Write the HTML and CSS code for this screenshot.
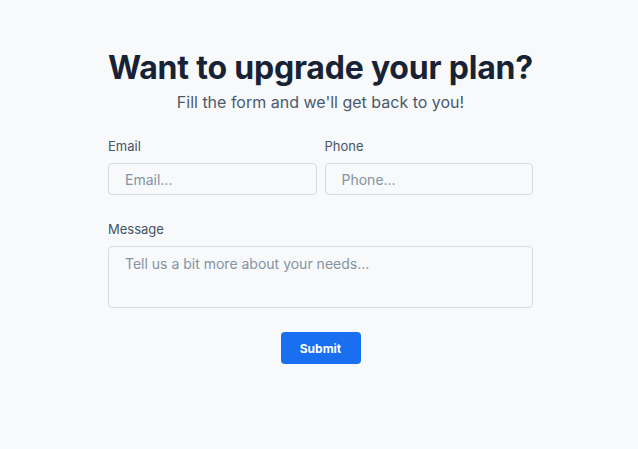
FILE: index.html
```html
<!DOCTYPE html>
<html lang="en">
<head>
  <meta charset="UTF-8" />
  <meta name="viewport" content="width=device-width, initial-scale=1.0"/>
  <title>Upgrade your plan</title>
  <link rel="stylesheet" href="styles.css">
</head>
<body>
  <main class="page">
    <form class="upgrade-form">
      <header class="form-head">
        <h1>Want to upgrade your plan?</h1>
        <p>Fill the form and we'll get back to you!</p>
      </header>

      <div class="row">
        <label class="field">
          <span class="field-label">Email</span>
          <input type="email" placeholder="Email..." />
        </label>
        <label class="field">
          <span class="field-label">Phone</span>
          <input type="tel" placeholder="Phone..." />
        </label>
      </div>

      <label class="field">
        <span class="field-label">Message</span>
        <textarea placeholder="Tell us a bit more about your needs..."></textarea>
      </label>

      <div class="actions">
        <button type="button" class="submit">Submit</button>
      </div>
    </form>
  </main>
</body>
</html>
```

FILE: styles.css
```css
* { box-sizing: border-box; margin: 0; padding: 0; }
body, html {
  height: 100%;
  width: 100%;
  background: #f7f9fb;
  font-family: Inter, 'Noto Sans', sans-serif;
  color: #1a2638;
}

.page {
  display: flex;
  justify-content: center;
  padding: 48px 0 0 3px;
}

.upgrade-form {
  width: 425px;
  display: flex;
  flex-direction: column;
}

.form-head {
  text-align: center;
  margin-bottom: 24px;
}

.form-head h1 {
  font-size: 32px;
  font-weight: 700;
  line-height: 40px;
  letter-spacing: -0.2px;
  white-space: nowrap;
  color: #172335;
}

.form-head p {
  font-size: 16px;
  line-height: 24px;
  color: #4b5a6c;
  margin-top: 2px;
}

.row {
  display: flex;
  gap: 8px;
  margin-bottom: 26px;
}

.row .field {
  flex: 1;
  min-width: 0;
}

.field {
  display: flex;
  flex-direction: column;
}

.field-label {
  font-size: 13px;
  line-height: 16px;
  color: #465466;
  margin-bottom: 9px;
}

.field input,
.field textarea {
  width: 100%;
  font-family: inherit;
  font-size: 14px;
  color: #1a2638;
  background: #f7f9fb;
  border: 1px solid #d3dce2;
  border-radius: 4px;
  padding: 0 16px;
  outline: none;
}

.field input { height: 32px; }

.field textarea {
  height: 62px;
  padding-top: 7px;
  resize: none;
  line-height: 20px;
}

.field input::placeholder,
.field textarea::placeholder {
  color: #8593a2;
}

.actions {
  display: flex;
  justify-content: center;
  margin-top: 24px;
}

.submit {
  width: 80px;
  height: 32px;
  border: none;
  border-radius: 4px;
  background: #1a6ff0;
  color: #fff;
  font-family: inherit;
  font-size: 12px;
  font-weight: 700;
  cursor: pointer;
}
```
